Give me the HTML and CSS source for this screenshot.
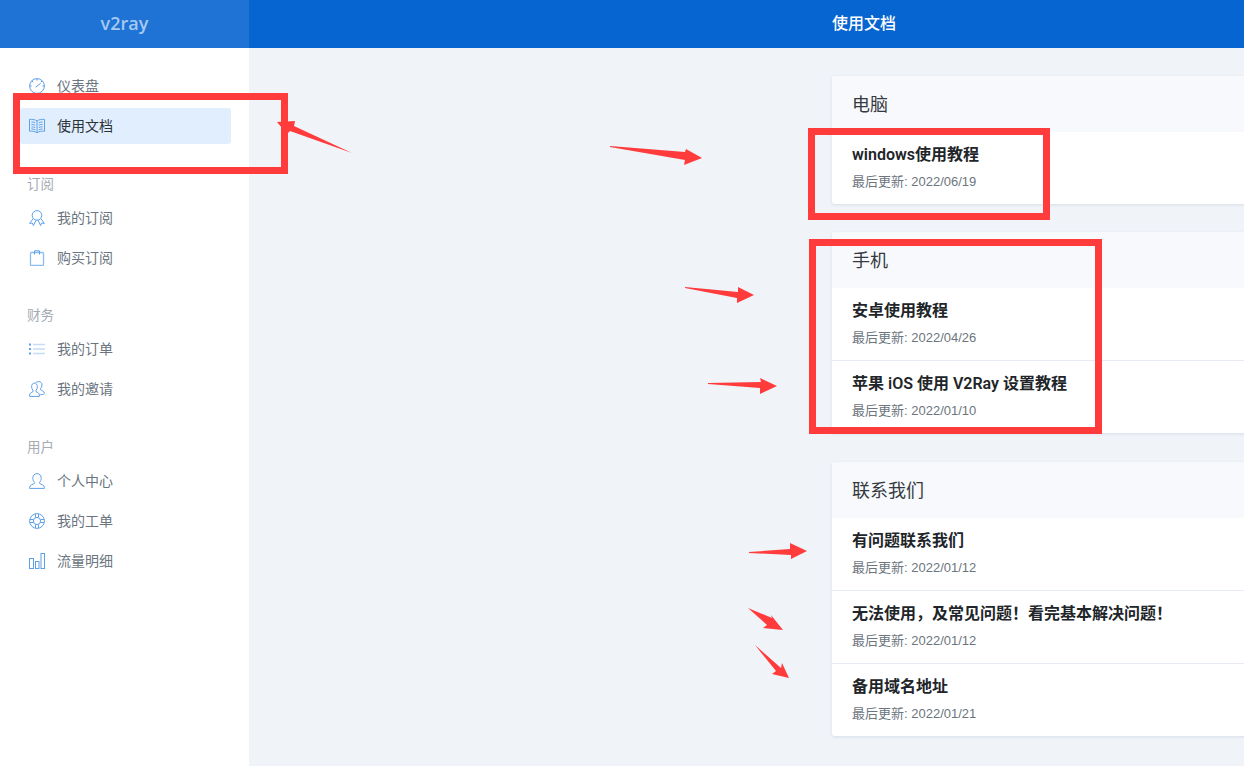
FILE: index.html
```html
<!DOCTYPE html>
<html lang="zh-CN">
<head>
<meta charset="utf-8">
<title>使用文档</title>
<link rel="stylesheet" href="styles.css">
</head>
<body>
<div class="app">
  <aside class="sidebar">
    <div class="brand">v2ray</div>
    <nav class="nav">
      <a class="nav-link">
        <svg class="ico" viewBox="0 0 16 16"><circle cx="8" cy="8" r="7.400"/><path d="M8 .6v2M.6 8h2M13.400 8h2M2.800 2.800l1.400 1.400M13.200 2.800l-1.400 1.400M6.600 9.200l5-3.800"/></svg>
        <span class="nav-text">仪表盘</span>
      </a>
      <a class="nav-link active">
        <svg class="ico" viewBox="0 0 16 16"><path d="M8 3C6.500 1.600 3 1.200.5 1.400v11.800c2.500-.2 6 .2 7.500 1.600 1.500-1.400 5-1.800 7.500-1.600V1.400C13 1.200 9.500 1.600 8 3zM8 3v11.800M2.400 4c1.200 0 2.800.2 3.800.8M2.400 6.400c1.200 0 2.800.2 3.800.8M2.400 8.800c1.200 0 2.800.2 3.800.8M2.400 11c1.200 0 2.800.2 3.800.8M13.600 4c-1.200 0-2.800.2-3.800.8M13.600 6.400c-1.200 0-2.800.2-3.800.8M13.600 8.800c-1.200 0-2.800.2-3.800.8M13.600 11c-1.200 0-2.800.2-3.800.8"/></svg>
        <span class="nav-text">使用文档</span>
      </a>
      <div class="nav-heading">订阅</div>
      <a class="nav-link">
        <svg class="ico" viewBox="0 0 16 16"><circle cx="8" cy="5.400" r="4.800"/><path d="M4.200 8.600.6 13.400l2.800-.4 1 2.600L7 10.200M11.800 8.600l3.600 4.800-2.800-.4-1 2.600L9 10.200"/></svg>
        <span class="nav-text">我的订阅</span>
      </a>
      <a class="nav-link">
        <svg class="ico" viewBox="0 0 16 16"><rect class="soft" x="1.500" y="2.500" width="13" height="13" rx="1"/><path d="M5.500 4.500V.8h5v3.700"/></svg>
        <span class="nav-text">购买订阅</span>
      </a>
      <div class="nav-heading">财务</div>
      <a class="nav-link">
        <svg class="ico" viewBox="0 0 16 16"><path class="dots" d="M0 2.500h2v2H0zM0 7h2v2H0zM0 11.500h2v2H0z"/><path class="pale" d="M4 3.500h12M4 8h12M4 12.500h12"/></svg>
        <span class="nav-text">我的订单</span>
      </a>
      <a class="nav-link">
        <svg class="ico" viewBox="0 0 16 16"><path d="M.6 15.400h9.800v-1.400c0-1.800-2.200-2.600-3.400-3.400V9.200c.9-.8 1.400-1.900 1.400-3.400 0-2.200-1.200-3.600-3-3.600S2.600 3.600 2.600 5.800c0 1.500.5 2.600 1.400 3.400v1.400c-1.200.8-3.400 1.600-3.400 3.400zM6.600 1.900C7.300 1 8.400.6 9.800.6c1.900 0 3.200 1.400 3.200 3.400 0 1.500-.5 2.600-1.400 3.400v1.400c1.200.8 3.800 1.600 3.800 3.400 0 .9-1 1.400-2.600 1.400h-1.600"/></svg>
        <span class="nav-text">我的邀请</span>
      </a>
      <div class="nav-heading">用户</div>
      <a class="nav-link">
        <svg class="ico" viewBox="0 0 16 16"><path d="M.6 15.400h14.800v-1.200c0-2-3.400-2.800-4.800-3.800V9.200c1-.9 1.600-2.300 1.600-4C12.200 2.400 10.400.6 8 .6S3.800 2.400 3.800 5.200c0 1.700.6 3.100 1.600 4v1.200C4 11.400.6 12.200.6 14.200z"/></svg>
        <span class="nav-text">个人中心</span>
      </a>
      <a class="nav-link">
        <svg class="ico" viewBox="0 0 16 16"><circle cx="8" cy="8" r="7.400"/><circle cx="8" cy="8" r="3.600"/><path d="M6.500 .9v3.500M9.500 .9v3.500M6.500 11.600v3.500M9.500 11.600v3.500M.9 6.500h3.500M.9 9.500h3.500M11.600 6.500h3.500M11.600 9.500h3.500"/></svg>
        <span class="nav-text">我的工单</span>
      </a>
      <a class="nav-link">
        <svg class="ico" viewBox="0 0 16 16"><rect x=".5" y="5.500" width="4" height="10"/><rect x="6.500" y="8.500" width="3.500" height="7"/><rect x="12" y=".5" width="3.500" height="15"/></svg>
        <span class="nav-text">流量明细</span>
      </a>
    </nav>
  </aside>
  <div class="main">
    <header class="topbar">使用文档</header>
    <section class="content">
      <div class="block">
        <h3 class="block-title">电脑</h3>
        <a class="row"><div class="row-title">windows使用教程</div><div class="row-meta">最后更新: 2022/06/19</div></a>
      </div>
      <div class="block">
        <h3 class="block-title">手机</h3>
        <a class="row"><div class="row-title">安卓使用教程</div><div class="row-meta">最后更新: 2022/04/26</div></a>
        <a class="row"><div class="row-title">苹果 iOS 使用 V2Ray 设置教程</div><div class="row-meta">最后更新: 2022/01/10</div></a>
      </div>
      <div class="block">
        <h3 class="block-title">联系我们</h3>
        <a class="row"><div class="row-title">有问题联系我们</div><div class="row-meta">最后更新: 2022/01/12</div></a>
        <a class="row"><div class="row-title">无法使用，及常见问题！看完基本解决问题！</div><div class="row-meta">最后更新: 2022/01/12</div></a>
        <a class="row"><div class="row-title">备用域名地址</div><div class="row-meta">最后更新: 2022/01/21</div></a>
      </div>
    </section>
  </div>
</div>
<svg class="annot" viewBox="0 0 1244 766" aria-hidden="true">
  <rect class="box" x="16.500" y="96.500" width="268" height="74"/>
  <rect class="box" x="811.500" y="131.500" width="235" height="85"/>
  <rect class="box" x="812.500" y="242.500" width="286" height="188"/>
  <polygon class="arrow" points="352,153 294,126 295,121 277,122 287,134 290,131"/>
  <polygon class="arrow" points="610,146 610,147 685,160 684,165 702,158 686,149 685,152"/>
  <polygon class="arrow" points="685,287 685,288 737,298 737,303 754,295 738,287 738,292"/>
  <polygon class="arrow" points="708,383 708,384 760,388 760,394 777,386 760,378 761,382"/>
  <polygon class="arrow" points="749,552 749,553 791,555 791,559 807,551 790,543 790,549"/>
  <polygon class="arrow" points="748,608 767,625 763,628 783,630 771,615 772,618"/>
  <polygon class="arrow" points="755,645 776,671 772,674 789,678 782,663 781,668"/>
</svg>
</body>
</html>
```
FILE: styles.css
```css
* { box-sizing: border-box; }
html, body { margin: 0; height: 100%; overflow: hidden; }
body {
  font-family: "Open Sans", "Noto Sans CJK SC", sans-serif;
  font-size: 14px;
  color: #343a40;
  background: #f0f3f8;
}
.app { display: flex; height: 766px; width: 1244px; overflow: hidden; }
.sidebar { flex: 0 0 249px; background: #fff; }
.brand {
  height: 48px;
  background: #1f73d5;
  color: #a6c9f1;
  font-size: 18px;
  font-weight: 600;
  display: flex;
  align-items: center;
  justify-content: center;
  padding-bottom: 3px;
}
.nav { display: flex; flex-direction: column; padding: 20px 18px 0 20px; }
.nav-link {
  display: flex;
  align-items: center;
  gap: 12px;
  height: 36px;
  margin-bottom: 4px;
  padding-left: 9px;
  border-radius: 3px;
  color: #6b7580;
  font-size: 14px;
}
.nav-text { padding-bottom: 2px; }
.nav-link.active { background: #e1eefd; color: #2b3238; }
.ico {
  flex: 0 0 16px;
  width: 16px;
  height: 16px;
  fill: none;
  stroke: #5ea0e8;
  stroke-width: 1;
}
.ico .dots { fill: #5ea0e8; stroke: none; }
.ico .pale { stroke: #c5dcf6; stroke-width: 1.500; }
.ico .soft { stroke: #8dbcef; stroke-width: 1.300; }
.nav-heading {
  margin: 25.500px 0 0 7px;
  height: 26px;
  font-size: 13.500px;
  line-height: 20px;
  color: #a4abb3;
}
.main { flex: 1; min-width: 0; display: flex; flex-direction: column; }
.topbar {
  flex: 0 0 48px;
  background: #0665d0;
  color: #fff;
  font-size: 16px;
  font-weight: 500;
  display: flex;
  align-items: center;
  justify-content: center;
  padding-left: 235px;
  padding-bottom: 5px;
}
.content { padding: 28px 0 0 583px; width: 1244px; }
.block {
  width: 700px;
  margin-bottom: 28.400px;
  background: #fff;
  border-radius: 3px 0 0 3px;
  box-shadow: 0 1px 3px rgba(170, 185, 205, .35);
  overflow: hidden;
}
.block-title {
  margin: 0;
  height: 56px;
  padding-left: 20px;
  background: #f8f9fc;
  font-size: 18px;
  font-weight: 400;
  line-height: 57px;
  color: #343a40;
}
.row { display: block; height: 72px; padding: 11px 20px 0; }
.row + .row { height: 73px; border-top: 1px solid #e6ebf4; }
.row-title { font-family: Roboto, "Noto Sans CJK SC", sans-serif; font-size: 16px; font-weight: 600; line-height: 24px; color: #212529; }
.row-meta { margin-top: 5px; font-family: "Liberation Sans", "Noto Sans CJK SC", sans-serif; font-size: 13px; line-height: 20px; color: #6c757d; }
.annot { position: absolute; left: 0; top: 0; width: 1244px; height: 766px; pointer-events: none; }
.box { fill: none; stroke: #ff3b3b; stroke-width: 7; }
.arrow { fill: #ff3b3b; }
```
